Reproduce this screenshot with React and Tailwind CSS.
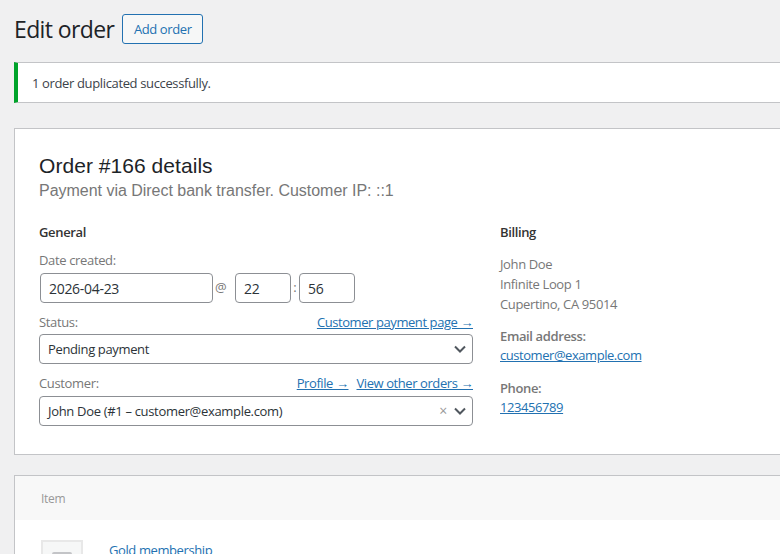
const ui = { fontFamily: '"Open Sans", "Noto Sans", sans-serif' };

function Chevron() {
  return (
    <svg width="14" height="14" viewBox="0 0 14 14" fill="none" className="shrink-0">
      <path d="M2 4.5 L7 9.5 L12 4.5" stroke="#50575e" strokeWidth="2" />
    </svg>
  );
}

function Link({ children, className = "" }) {
  return <a className={`text-[#2271b1] underline text-[13px] tracking-[-0.42px] ${className}`}>{children}</a>;
}

function FieldInput({ className, children }) {
  return (
    <div className={`h-[30px] border border-[#8c8f94] rounded-[4px] flex items-center px-2 text-[#2c3338] ${className}`}>
      {children}
    </div>
  );
}

export default function App() {
  return (
    <div className="w-[780px] h-[554px] overflow-hidden bg-[#f0f0f1] text-[#3c434a]" style={ui}>
      <div className="w-[1000px] pl-[14px]">
        <div className="flex items-center h-[30px] mt-[14px]">
          <h1 className="text-[23px] leading-[30px] text-[#1d2327] tracking-[-0.62px]">Edit order</h1>
          <button className="ml-[8px] w-[81px] h-[30px] pt-[2px] border border-[#2271b1] rounded-[3px] bg-[#f6f7f7] text-[#2271b1] text-[13px] tracking-[-0.4px]">Add order</button>
        </div>

        <div className="mt-[18px] h-[41px] pt-[2px] bg-white border border-[#c3c4c7] border-l-4 border-l-[#00a32a] flex items-center pl-[14px] text-[13px] text-[#3c434a] tracking-[-0.36px]">
          1 order duplicated successfully.
        </div>

        <div className="mt-[25px] h-[327px] bg-white border border-[#c3c4c7] pt-[24px] pl-[24px]">
          <h2 className="text-[21px] leading-[26px] text-[#1d2327] tracking-[0.05px]" style={{ fontFamily: '"Liberation Sans", sans-serif' }}>Order #166 details</h2>
          <p className="mt-[1px] text-[16px] leading-[22px] text-[#777777] tracking-[-0.02px]" style={{ fontFamily: '"Liberation Sans", sans-serif' }}>Payment via Direct bank transfer. Customer IP: ::1</p>

          <div className="flex mt-[20px]">
            <div className="w-[434px]">
              <h3 className="text-[13px] font-semibold leading-[20px] text-[#333333] tracking-[-0.35px]">General</h3>
              <div className="mt-[8px] text-[13px] leading-[20px] text-[#777777] tracking-[-0.35px]">Date created:</div>
              <div className="flex items-center mt-[3px] text-[#777777] text-[13px]">
                <FieldInput className="w-[173px] ml-[1px] text-[14px] tracking-[-0.3px]">2026-04-23</FieldInput>
                <span className="w-[22px] pl-[2px]">@</span>
                <FieldInput className="w-[56px] text-[14px] tracking-[-0.3px]">22</FieldInput>
                <span className="w-[8px] text-center">:</span>
                <FieldInput className="w-[56px] text-[14px] tracking-[-0.3px]">56</FieldInput>
              </div>
              <div className="flex justify-between mt-[9px] text-[13px] leading-[20px] text-[#777777] tracking-[-0.35px]">
                <span>Status:</span>
                <Link>Customer payment page →</Link>
              </div>
              <FieldInput className="justify-between pr-[5px] mt-[2px] text-[13px] tracking-[-0.36px] pt-[2px]">
                <span>Pending payment</span>
                <span className="-mt-[2px]"><Chevron /></span>
              </FieldInput>
              <div className="flex justify-between mt-[9px] text-[13px] leading-[20px] text-[#777777] tracking-[-0.35px]">
                <span>Customer:</span>
                <span className="flex gap-[8px]">
                  <Link>Profile →</Link>
                  <Link>View other orders →</Link>
                </span>
              </div>
              <FieldInput className="justify-between pr-[5px] mt-[3px] text-[13px] tracking-[-0.32px] pt-[2px]">
                <span>John Doe (#1 – customer@example.com)</span>
                <span className="flex items-center gap-[6px] -mt-[2px]">
                  <span className="text-[#999999] text-[14px] leading-none">×</span>
                  <Chevron />
                </span>
              </FieldInput>
            </div>

            <div className="ml-[27px] w-[300px] text-[13px] leading-[20px] text-[#777777] tracking-[-0.37px]">
              <h3 className="font-semibold text-[#333333]">Billing</h3>
              <p className="mt-[12px]">John Doe<br />Infinite Loop 1<br />Cupertino, CA 95014</p>
              <p className="mt-[12px] font-semibold">Email address:</p>
              <p className="mt-[-1px]"><Link className="tracking-[-0.45px]">customer@example.com</Link></p>
              <p className="mt-[13px] font-semibold">Phone:</p>
              <p className="mt-[-1px]"><Link>123456789</Link></p>
            </div>
          </div>
        </div>

        <div className="mt-[20px] h-[200px] bg-white border border-[#c3c4c7]">
          <div className="h-[44px] pt-[2px] bg-[#f8f8f8] flex items-center pl-[26px] text-[12px] text-[#999999] tracking-[-0.3px]">Item</div>
          <div className="flex pl-[26px] pt-[20px]">
            <div className="w-[42px] h-[42px] bg-[#f6f7f7] border-2 border-[#e8e8e8] flex justify-center pt-[10px]">
              <div className="w-[20px] h-[20px] border-2 border-[#c3c4c7] rounded-[2px]"></div>
            </div>
            <a className="ml-[26px] mt-[1px] text-[13px] leading-[18px] text-[#2271b1] tracking-[-0.4px]">Gold membership</a>
          </div>
        </div>
      </div>
    </div>
  );
}
